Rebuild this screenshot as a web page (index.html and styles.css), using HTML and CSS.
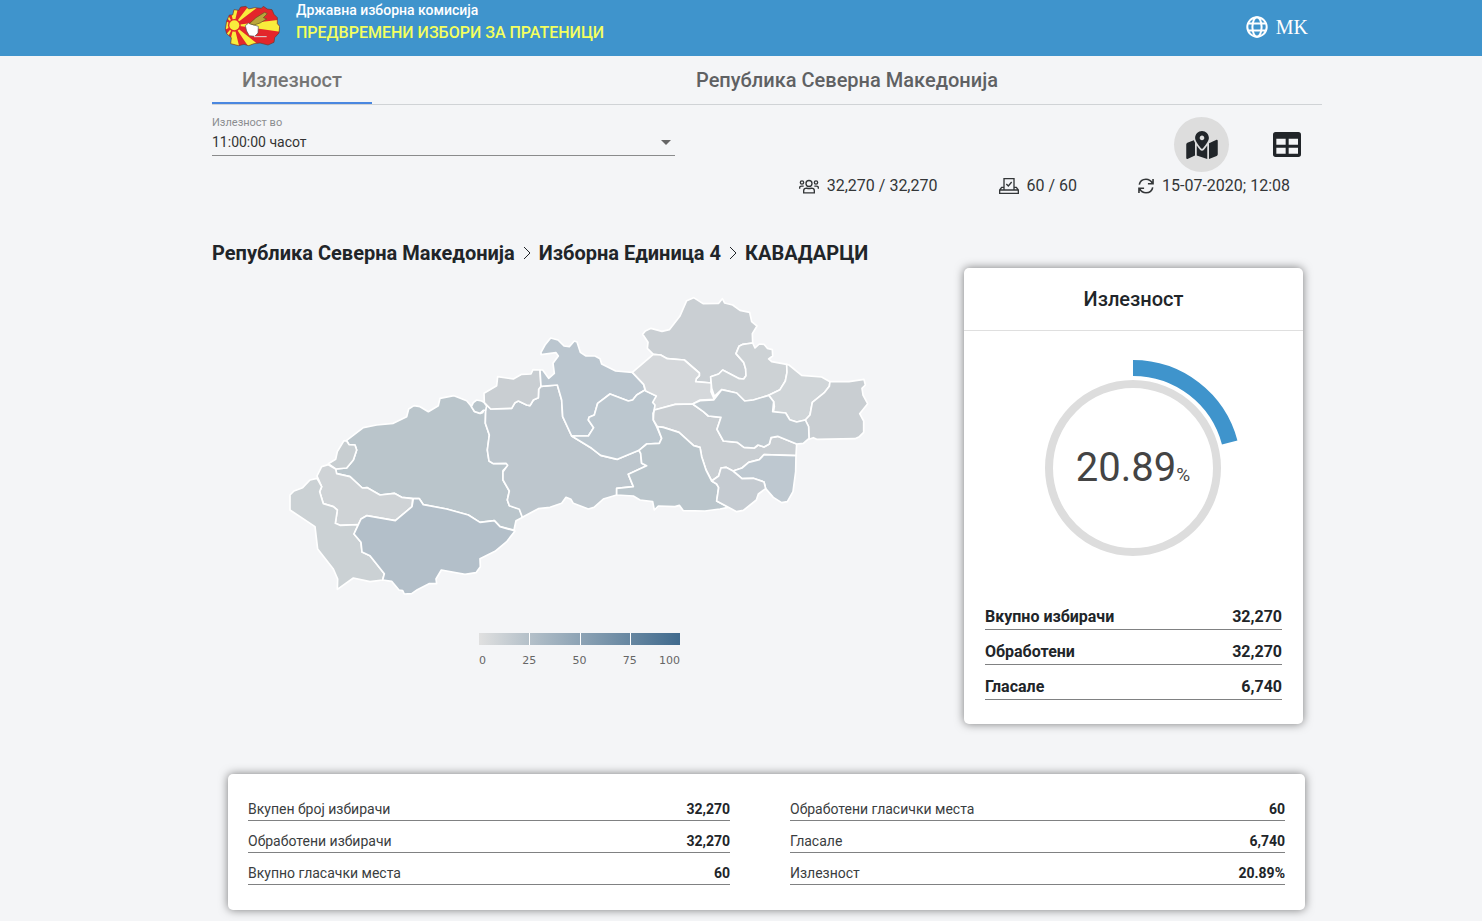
FILE: index.html
```html
<!DOCTYPE html>
<html lang="mk">
<head>
<meta charset="utf-8">
<meta name="viewport" content="width=device-width, initial-scale=1">
<title>Државна изборна комисија</title>
<link rel="stylesheet" href="styles.css">
</head>
<body>
<header class="topbar">
  <svg class="logo" viewBox="0 0 168 126" aria-hidden="true">
    <defs>
      <clipPath id="land"><path d="M8 48 16 30 26 30 30 14 44 16 50 6 66 4 74 12 92 8 112 10 118 4 130 12 144 14 150 28 160 38 160 56 167 64 165 84 152 98 150 112 132 120 108 114 90 116 74 122 60 118 44 122 20 116 22 98 8 86 4 72Z"/></clipPath>
    </defs>
    <g clip-path="url(#land)">
      <path fill="#e3262b" d="M0 0h168v126H0z"/>
      <path fill="#f9ec3c" d="M30 61 168 44v36zM30 61 16 0h28zM30 61 14 126h32zM30 61 0 46v30zM30 61 76 0h34zM30 61 74 126h38zM30 61 0 10v20zM30 61 0 96v22z"/>
      <circle cx="31" cy="61" r="19" fill="#e3262b"/>
      <circle cx="31" cy="61" r="15" fill="#f9ec3c"/>
    </g>
    <path fill="none" stroke="#6b3a2a" stroke-width="2" d="M8 48 16 30 26 30 30 14 44 16 50 6 66 4 74 12 92 8 112 10 118 4 130 12 144 14 150 28 160 38 160 56 167 64 165 84 152 98 150 112 132 120 108 114 90 116 74 122 60 118 44 122 20 116 22 98 8 86 4 72Z"/>
    <path fill="#fff" stroke="#555" stroke-width="2" d="M64 62 74 54 90 60 103 64 102 84 92 94 76 92 68 78Z"/>
    <path fill="#b9a53a" stroke="#5d5420" stroke-width="2" d="M76 56 96 38 122 22 130 26 118 38 128 42 108 54 90 60Z"/>
    <path stroke="#ddd" stroke-width="3" d="M90 95h38"/>
  </svg>
  <div class="brand">
    <span class="brand-org">Државна изборна комисија</span>
    <span class="brand-title">ПРЕДВРЕМЕНИ ИЗБОРИ ЗА ПРАТЕНИЦИ</span>
  </div>
  <button class="lang" type="button">
    <svg class="globe" viewBox="0 0 22 22" aria-hidden="true">
      <g fill="none" stroke="currentColor" stroke-width="2"><circle cx="11" cy="11" r="9.7"/><ellipse cx="11" cy="11" rx="4.6" ry="9.7"/><path d="M2 7.5h18M2 14.5h18"/></g>
    </svg>
    MK
  </button>
</header>

<main class="page">
  <div class="tabs">
    <button class="tab" type="button">Излезност</button>
    <h1 class="region">Република Северна Македонија</h1>
  </div>

  <div class="toolbar">
    <div class="field">
      <label class="field-label" for="time">Излезност во</label>
      <select class="field-select" id="time"><option>11:00:00 часот</option></select>
      <svg class="field-arrow" viewBox="0 0 10 5" aria-hidden="true"><path d="M0 0h10L5 5z"/></svg>
    </div>
    <div class="views">
      <button class="view view-active" type="button" aria-label="Мапа">
        <svg class="icon-map" viewBox="0 0 576 512"><path d="M288 0c-69.59 0-126 56.41-126 126 0 56.26 82.35 158.8 113.9 196.02 6.39 7.54 17.82 7.54 24.2 0C331.65 284.8 414 182.26 414 126 414 56.41 357.59 0 288 0zm0 168c-23.2 0-42-18.8-42-42s18.8-42 42-42 42 18.8 42 42-18.8 42-42 42zM20.12 215.95A32.006 32.006 0 0 0 0 245.66v250.32c0 11.32 11.43 19.06 21.94 14.86L160 448V214.92c-8.84-15.98-16.07-31.54-21.25-46.42L20.12 215.95zM288 359.67c-14.07 0-27.38-6.18-36.51-16.96-19.66-23.2-40.57-49.62-59.49-76.72v182l192 64V266c-18.92 27.09-39.82 53.52-59.49 76.72-9.13 10.77-22.44 16.95-36.51 16.95zm266.06-198.51L416 224v288l139.88-55.95A31.996 31.996 0 0 0 576 426.34V176.02c0-11.32-11.43-19.06-21.94-14.86z"/></svg>
      </button>
      <button class="view" type="button" aria-label="Табела">
        <svg class="icon-table" viewBox="0 0 84 75"><path fill-rule="evenodd" d="M8 0h68a8 8 0 0 1 8 8v59a8 8 0 0 1-8 8H8a8 8 0 0 1-8-8V8a8 8 0 0 1 8-8ZM10 20v18h28V20ZM47 20v18h28V20ZM10 47v18h28V47ZM47 47v18h28V47Z"/></svg>
      </button>
    </div>
  </div>

  <div class="status">
    <span class="status-item">
      <svg class="icon-people" viewBox="0 0 60 44" aria-hidden="true"><g fill="none" stroke="currentColor" stroke-width="4"><circle cx="30" cy="13" r="9"/><circle cx="9" cy="10" r="5"/><circle cx="51" cy="10" r="5"/><path d="M14 41v-6q0-8 9-8 7 3 14 0 9 0 9 8v6zM2 29v-3q0-5 6-5h6M58 29v-3q0-5-6-5h-6"/></g></svg>
      32,270 / 32,270
    </span>
    <span class="status-item">
      <svg class="icon-box" viewBox="0 0 60 48" aria-hidden="true"><g fill="none" stroke="currentColor" stroke-width="4"><path d="M15 35V2h30v33M15 28H8L2 36v10h56V36l-6-8h-7M2 36h56M22 18l6 6 10-12"/></g></svg>
      60 / 60
    </span>
    <span class="status-item">
      <svg class="icon-sync" viewBox="0 0 50 48" aria-hidden="true"><g fill="none" stroke="currentColor" stroke-width="5"><path d="M4 20C6 9 15 3 25 3c9 0 16 5 20 13M47 2v15H31M46 28C44 39 35 45 25 45 16 45 9 40 5 32M3 46V31h16"/></g></svg>
      15-07-2020; 12:08
    </span>
  </div>

  <div class="results">
    <section class="map-panel">
      <nav class="crumbs">
        <a class="crumb" href="#">Република Северна Македонија</a>
        <svg class="chevron" viewBox="0 0 8 14" aria-hidden="true"><path d="M1 1l6 6-6 6"/></svg>
        <a class="crumb" href="#">Изборна Единица 4</a>
        <svg class="chevron" viewBox="0 0 8 14" aria-hidden="true"><path d="M1 1l6 6-6 6"/></svg>
        <a class="crumb" href="#">КАВАДАРЦИ</a>
      </nav>
      <svg class="map" viewBox="0 0 1800 960" role="img" aria-label="Мапа на општини">
        <g transform="translate(0 285)">
          <path fill="#bac5cb" d="M200 181 250 143 290 135 340 130 380 110 386 87 402 77 420 80 445 95 475 77 480 55 522 47 560 62 575 80 583 94 600 100 608 98 612 88 617 92 616 130 628 165 622 210 627 243 640 250 680 250 685 256 669 272 669 300 688 333 682 360 688 377 718 385 728 412 708 422 702 450 660 440 643 422 600 427 565 405 500 387 430 374 418 356 400 356 365 352 343 340 300 345 262 323 247 324 210 290 170 281 167 267 200 264 220 240 230 210 225 195 207 194Z"/>
          <path fill="#c8ced1" d="M192 182 200 183 207 194 225 195 230 210 220 240 200 264 167 267 145 251 167 238 172 215Z"/>
          <path fill="#cfd3d6" d="M125 260 145 254 167 267 170 281 210 290 247 324 262 323 300 345 343 340 365 352 398 356 396 380 346 422 260 407 243 417 235 434 180 436 166 430 172 390 160 380 130 371 119 335 125 320 111 288Z"/>
          <path fill="#cbd1d4" d="M30 345 42 333 68 323 90 300 111 295 125 320 119 335 130 371 160 380 172 390 166 430 180 436 235 434 222 462 243 487 246 516 270 527 313 581 308 600 270 605 220 594 172 628 173 597 160 567 113 507 105 440 30 390Z"/>
          <path fill="#b3bfc9" d="M400 356 418 356 430 374 500 387 565 405 600 427 643 422 660 440 705 453 680 485 645 514 600 536 601 560 588 578 555 583 484 570 468 597 470 611 447 611 412 629 395 641 373 642 368 632 357 630 335 604 308 600 313 581 270 527 246 516 243 487 222 462 235 434 243 417 260 407 346 422 396 380Z"/>
        </g>
        <g transform="translate(570 105)">
          <path fill="#bdc6cd" d="M43 248 62 267 125 265 135 248 145 243 170 255 180 257 190 240 205 233 206 208 213 199 262 195 275 240 278 290 305 348 365 385 392 406 442 418 507 391 512 400 515 430 530 437 475 463 490 500 440 505 440 525 400 537 372 562 355 567 310 550 303 538 288 532 275 550 240 562 205 566 157 592 148 568 118 557 112 540 118 513 99 480 99 455 113 436 108 430 70 431 57 423 52 390 58 345 46 310 47 270Z"/>
          <path fill="#bac5cb" d="M43 248 35 243 20 240 10 248 4 260 14 275 30 280 40 271 47 270 50 258Z"/>
          <path fill="#c9ced2" d="M42 220 80 197 83 170 130 177 155 163 183 162 189 149 210 150 213 199 206 208 205 233 190 240 180 257 170 255 145 243 135 248 125 265 62 267 43 248Z"/>
          <path fill="#bbc6cf" d="M213 97 225 75 242 54 264 60 282 78 298 80 313 63 321 66 331 97 348 108 375 108 390 116 395 132 437 153 487 157 521 193 525 210 500 225 488 240 475 243 420 222 383 250 373 285 357 292 355 300 371 323 355 348 305 348 278 290 275 240 262 195 213 199 210 150 218 150 236 175 253 160 249 130 265 108 258 98 213 104Z"/>
          <path fill="#bcc7cf" d="M525 210 559 228 553 270 549 280 550 300 560 320 575 355 568 370 530 372 507 391 442 418 392 406 365 385 305 348 355 348 371 323 355 300 357 292 373 285 383 250 420 222 475 243 488 240 500 225Z"/>
        </g>
        <g transform="translate(1020 0)">
          <path fill="#cacfd3" d="M68 148 76 138 93 130 126 139 148 134 180 93 200 47 221 38 249 56 296 55 307 41 314 54 338 60 360 76 389 82 395 110 411 123 397 146 398 174 369 178 357 184 348 206 371 232 377 252 378 272 371 282 358 281 308 255 296 267 272 275 273 294 227 290 229 281 238 272 238 264 193 225 142 221 122 210 100 208 82 190 84 172Z"/>
          <path fill="#d5d8db" d="M37 262 100 208 122 210 142 221 193 225 238 264 238 272 229 281 227 290 275 294 273 320 283 343 240 345 218 357 166 358 103 375 105 360 98 352 109 333 77 318 71 298Z"/>
          <path fill="#cdd2d5" d="M398 174 405 189 418 177 432 178 442 190 457 194 458 213 446 222 455 230 500 238 501 262 496 288 480 314 446 331 400 345 374 348 350 324 305 314 283 334 275 310 272 275 296 267 308 255 358 281 371 282 378 272 377 252 371 232 348 206 357 184 369 178Z"/>
          <path fill="#d0d5d8" d="M500 238 507 240 545 271 605 276 630 290 628 304 614 322 577 352 570 390 556 405 530 411 509 404 497 384 460 382 463 364 461 350 446 331 480 314 496 288 501 262Z"/>
          <path fill="#c9ced2" d="M630 290 687 290 732 283 736 300 726 310 729 330 743 356 719 386 731 408 731 442 718 455 705 461 590 463 580 458 567 463 565 425 556 405 570 390 577 352 614 322 628 304Z"/>
          <path fill="#c9ced2" d="M103 375 166 358 218 357 250 380 265 393 303 397 291 433 310 468 352 472 372 487 403 489 414 480 432 486 448 477 453 458 473 454 530 477 528 512 432 509 418 524 386 532 366 549 339 558 318 547 303 549 296 573 275 588 258 555 245 515 240 487 221 482 177 442 130 427 112 425 100 405 101 385Z"/>
          <path fill="#c0c9cf" d="M218 357 240 347 281 345 305 314 350 324 374 348 400 345 446 331 461 350 458 380 497 384 509 404 530 411 556 405 566 425 567 460 550 475 530 477 473 454 453 458 448 477 432 486 414 480 403 489 372 487 352 472 310 468 291 433 303 397 265 393 250 380Z"/>
          <path fill="#bec8d0" d="M339 558 366 549 386 532 418 524 432 509 528 512 527 560 519 620 502 650 485 653 460 637 437 611 432 591 400 580 366 581Z"/>
          <path fill="#bac5cb" d="M112 425 130 427 177 442 221 482 240 487 245 515 258 555 275 588 290 597 296 608 290 648 325 667 300 672 255 678 190 677 178 661 165 665 115 663 103 675 98 650 60 645 40 633-10 630-10 610 40 605 25 568 80 542 65 535 62 505 57 496 80 477 118 475 125 460Z"/>
          <path fill="#c5cbd1" d="M303 549 318 547 339 558 366 581 400 580 432 591 437 611 415 627 409 645 370 676 350 680 325 667 290 648 296 608 290 597 275 588 296 573Z"/>
        </g>
      </svg>
      <div class="legend">
        <div class="legend-bar"><i></i><i></i><i></i><i></i></div>
        <div class="legend-ticks"><span>0</span><span>25</span><span>50</span><span>75</span><span>100</span></div>
      </div>
    </section>

    <section class="card turnout">
      <h2 class="turnout-title">Излезност</h2>
      <div class="gauge">
        <svg class="gauge-ring" viewBox="0 0 216 216" aria-hidden="true">
          <circle cx="108" cy="108" r="84" fill="none" stroke="#ddd" stroke-width="8"/>
          <path d="M108 8A100 100 0 0 1 204.7 82.5" fill="none" stroke="#3f94cc" stroke-width="16"/>
        </svg>
        <p class="gauge-value">20.89<small class="gauge-unit">%</small></p>
      </div>
      <table class="totals">
        <tr><th scope="row">Вкупно избирачи</th><td>32,270</td></tr>
        <tr><th scope="row">Обработени</th><td>32,270</td></tr>
        <tr><th scope="row">Гласале</th><td>6,740</td></tr>
      </table>
    </section>
  </div>

  <section class="card details">
    <table class="facts">
      <tr><th scope="row">Вкупен број избирачи</th><td>32,270</td></tr>
      <tr><th scope="row">Обработени избирачи</th><td>32,270</td></tr>
      <tr><th scope="row">Вкупно гласачки места</th><td>60</td></tr>
    </table>
    <table class="facts">
      <tr><th scope="row">Обработени гласички места</th><td>60</td></tr>
      <tr><th scope="row">Гласале</th><td>6,740</td></tr>
      <tr><th scope="row">Излезност</th><td>20.89%</td></tr>
    </table>
  </section>
</main>
</body>
</html>
```

FILE: styles.css
```css
* { box-sizing: border-box; }

body {
  margin: 0;
  background: #f4f5f7;
  color: #212529;
  font-family: Roboto, "Liberation Sans", sans-serif;
  font-size: 16px;
}

button {
  border: 0;
  padding: 0;
  background: none;
  color: inherit;
  font: inherit;
  cursor: pointer;
}

h1, h2, p { margin: 0; }

.topbar {
  display: flex;
  align-items: center;
  height: 56px;
  padding: 0 174px 0 224px;
  background: #3f94cc;
  color: #fff;
}
.logo { width: 56px; height: 42px; margin-bottom: 4px; }
.brand { display: flex; flex-direction: column; margin: 0 auto 10px 16px; }
.brand-org { font-size: 14px; font-weight: 500; line-height: 20px; }
.brand-title { color: #f4ff5e; font-weight: 500; line-height: 26px; }
.lang {
  display: flex;
  align-items: center;
  gap: 8px;
  margin-bottom: 3px;
  font: 20px/24px "Liberation Serif", serif;
}
.globe { width: 22px; height: 22px; }

.page { padding: 0 160px 11px 212px; }

.tabs { display: flex; border-bottom: 1px solid #d0d3d6; }
.tab {
  width: 160px;
  height: 48px;
  padding-top: 2px;
  border-bottom: 2px solid #4a87e0;
  color: #757575;
  font-size: 20px;
  font-weight: 500;
}
.region {
  flex: 1;
  color: #5f6163;
  font-size: 20px;
  font-weight: 500;
  line-height: 48px;
  text-align: center;
}

.toolbar { display: flex; justify-content: space-between; padding: 12px 8px 0 0; }
.field { position: relative; width: 463px; }
.field-label { display: block; color: #8b8d90; font-size: 11px; line-height: 12px; margin-bottom: 1px; }
.field-select {
  display: block;
  width: 100%;
  height: 26px;
  border: 0;
  border-bottom: 1px solid #8a8b8c;
  border-radius: 0;
  padding: 0 0 2px;
  appearance: none;
  background: none;
  color: #333;
  font: 14px Roboto, "Liberation Sans", sans-serif;
}
.field-arrow { position: absolute; right: 4px; top: 23px; width: 10px; height: 5px; fill: #666; }
.views { display: flex; gap: 30px; }
.view { display: grid; place-items: center; width: 55px; height: 55px; border-radius: 50%; fill: #212529; }
.view-active { background: #ddd; }
.icon-map { width: 32px; height: 28px; }
.icon-table { width: 28px; height: 25px; }

.status {
  display: flex;
  justify-content: flex-end;
  gap: 61px;
  padding: 2px 32px 0 0;
  color: #333638;
  line-height: 24px;
}
.status-item { display: flex; align-items: center; gap: 8px; }
.icon-people { width: 20px; height: 15px; }
.icon-box { width: 20px; height: 16px; }
.icon-sync { width: 16px; height: 16px; }

.results {
  display: grid;
  grid-template-columns: 1fr 339px;
  align-items: start;
  gap: 17px;
  padding: 43px 19px 0 0;
}
.crumbs { display: flex; align-items: center; gap: 8px; line-height: 24px; }
.crumb { color: #212529; font-size: 20px; font-weight: 700; text-decoration: none; }
.chevron { width: 8px; height: 14px; fill: none; stroke: #212529; }
.map {
  display: block;
  width: 600px;
  margin: 20px auto 28px;
  stroke: #fff;
  stroke-width: 5;
  stroke-linejoin: round;
}
.legend { width: 201px; margin: 0 auto; }
.legend-bar {
  display: grid;
  grid-template-columns: repeat(4, 1fr);
  height: 12px;
  background: linear-gradient(90deg, #e0e0e0, #b4c0c9 25%, #406a8d);
}
.legend-bar i + i { border-left: 1px solid #fff; }
.legend-ticks {
  display: grid;
  grid-template-columns: 1fr 2fr 2fr 2fr 1fr;
  padding-top: 9px;
  color: #666;
  font: 11px/14px "DejaVu Sans", sans-serif;
  text-align: center;
}
.legend-ticks span:first-child { text-align: left; }
.legend-ticks span:last-child { text-align: right; }

.card { border-radius: 5px; background: #fff; box-shadow: 0 0 10px rgba(0, 0, 0, .5); }

.turnout { margin-top: 27px; padding-bottom: 24px; }
.turnout-title {
  border-bottom: 1px solid #dfdfdf;
  font-size: 20px;
  font-weight: 500;
  line-height: 62px;
  text-align: center;
}
.gauge { display: grid; place-items: center; padding: 29px 1px 19px 0; }
.gauge-ring, .gauge-value { grid-area: 1 / 1; }
.gauge-ring { width: 216px; height: 216px; }
.gauge-value { padding-top: 6px; color: #444; font-size: 40px; line-height: 48px; }
.gauge-unit { font-size: 19px; }

table { border-collapse: collapse; }
th { padding: 0; text-align: left; }
td { padding: 0; text-align: right; font-weight: 700; }
tr { border-bottom: 1px solid #808182; }

.totals { width: calc(100% - 42px); margin: 0 21px; line-height: 25px; }
.totals th, .totals td { padding-top: 9px; font-weight: 700; }

.details {
  display: grid;
  grid-template-columns: 482fr 495fr;
  gap: 60px;
  margin: 50px 17px 0 16px;
  padding: 15px 20px 25px;
}
.facts { width: 100%; font-size: 14px; line-height: 22px; }
.facts th, .facts td { padding-top: 9px; }
.facts th { font-weight: 400; color: #3a3d40; }
```
